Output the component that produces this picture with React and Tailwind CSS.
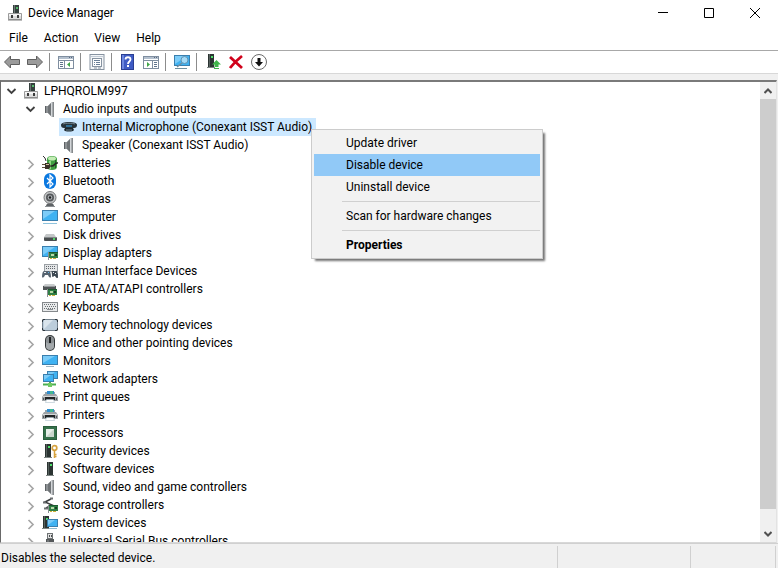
import React, { useState } from 'react';

const Icon = ({ children, size = 16 }) => (
  <svg width={size} height={size} viewBox="0 0 16 16" className="shrink-0" aria-hidden="true">
    {children}
  </svg>
);

/* Shared icon pieces */
const Screen = ({ x, y, w, h }) => (
  <>
    <rect x={x} y={y} width={w} height={h} fill="#3a7fae" />
    <rect x={x + 1} y={y + 1} width={w - 2} height={h - 2} fill="#3fb2f2" />
    <path d={`M${x + 1} ${y + 1}h${w - 4}L${x + 1} ${y + h - 2}z`} fill="#7cccf8" />
  </>
);

const Card = ({ x, y }) => (
  <>
    <rect x={x} y={y} width="1" height="8" fill="#8a8f92" />
    <rect x={x + 1} y={y} width="9" height="6" fill="#2f7f45" />
    <rect x={x + 1} y={y} width="9" height="1" fill="#1d5a2e" />
    <rect x={x + 3} y={y + 2} width="3" height="2" fill="#b9d9a8" />
    <rect x={x + 7} y={y + 2} width="2" height="2" fill="#173d22" />
    <path d={`M${x + 2} ${y + 6}h2v1h-2zM${x + 5} ${y + 6}h3v1h-3z`} fill="#d0b13c" />
  </>
);

const Tower = ({ x, y = 1, h = 13 }) => (
  <>
    <rect x={x} y={y} width="6" height={h} fill="#2b3432" />
    <rect x={x + 1} y={y} width="1" height={h} fill="#56605d" />
    <rect x={x + 3} y={y + 2} width="2" height="2" fill="#4ee06a" />
    <rect x={x - 1} y={y + h} width="8" height="1" fill="#7d8583" />
  </>
);

const RootIcon = () => (
  <Icon>
    <rect x="6" y="0" width="6" height="9" fill="#36403e" />
    <rect x="7" y="0" width="1" height="8" fill="#6c7674" />
    <rect x="9" y="2" width="2" height="2" fill="#55b96b" />
    <path d="M1.500 8.500h13v6h-13z" fill="#dcdcdc" stroke="#9a9a9a" />
    <path d="M2 9h12v2H2z" fill="#f4f4f4" />
    <path d="M4 10h2v3H4zM10 10h2v3h-2z" fill="#3b3b3b" />
    <path d="M1 15h14" stroke="#7f7f7f" />
  </Icon>
);

const SpeakerIcon = () => (
  <Icon>
    <rect x="3" y="5" width="3" height="7" fill="#8d9194" />
    <rect x="3" y="5" width="1" height="7" fill="#5d6164" />
    <path d="M6 5l4-4h2v15h-2l-4-4z" fill="#a7abae" />
    <path d="M6 5l3-3v13l-3-3z" fill="#6f7376" />
    <path d="M11 1h1v15h-1z" fill="#85898c" />
    <path d="M9.500 2v13" stroke="#d3d6d9" />
  </Icon>
);

const MicrophoneIcon = () => (
  <Icon>
    <path d="M0 6c0-2 3-3 8-3s8 1 8 3-1 3-3 3H3C1 9 0 8 0 6z" fill="#27333b" />
    <path d="M2 5c2-1 10-1 12 0" stroke="#72848f" fill="none" />
    <rect x="5" y="6" width="6" height="2" fill="#2f6f96" />
    <path d="M4 9h8l1 2c-1 2-9 2-10 0z" fill="#1c262c" />
    <path d="M5 11h6" stroke="#6d8390" />
  </Icon>
);

const BatteryIcon = () => (
  <Icon>
    <path d="M5 4c0-2 2-3 5-3s5 1 5 3v8c0 2-2 3-5 3s-5-1-5-3z" fill="#3f9f42" />
    <ellipse cx="10" cy="3.500" rx="4" ry="2" fill="#c3ecb4" />
    <path d="M8 6v8" stroke="#8fdb83" strokeWidth="2" />
    <path d="M13.500 5v8" stroke="#22602a" />
    <path d="M1 1l2 2 1 3" stroke="#333" fill="none" />
    <path d="M0 9.500h4M0 12.500h4" stroke="#5d4f3b" />
    <path d="M3 8h4l2 3-2 3H3z" fill="#3b3229" />
    <path d="M4 9.500h3" stroke="#d4c49b" />
    <path d="M9 11c4 1 3-4 7-3" stroke="#222" strokeWidth="1.500" fill="none" />
  </Icon>
);

const BluetoothIcon = () => (
  <Icon>
    <rect x="2" y="0" width="12" height="16" rx="6" fill="#0a78e0" />
    <path d="M5 5l6 6-3 3V2l3 3-6 6" fill="none" stroke="#fff" strokeWidth="1.200" />
  </Icon>
);

const CameraIcon = () => (
  <Icon>
    <path d="M4 15c0-2 2-3 4-3s4 1 4 3z" fill="#5e6265" />
    <circle cx="8" cy="6.500" r="6" fill="#c7c9ca" stroke="#77797b" />
    <circle cx="8" cy="6.500" r="4" fill="#55585b" />
    <circle cx="8" cy="6.500" r="2.300" fill="#aeb2b5" />
    <circle cx="8" cy="6.500" r="1.200" fill="#1e2022" />
    <path d="M3 15.500h10" stroke="#8b8f92" />
  </Icon>
);

const ComputerIcon = () => (
  <Icon>
    <Screen x={0} y={1} w={16} h={11} />
    <path d="M1 14.500h14" stroke="#8fc3dd" />
  </Icon>
);

const DiskIcon = () => (
  <Icon>
    <path d="M4 7h8l2 3H2z" fill="#c3c6c7" />
    <rect x="2" y="10" width="13" height="4" rx="1" fill="#4a4e50" />
    <path d="M2 10.500h13" stroke="#85898b" />
    <rect x="11" y="11" width="2" height="2" fill="#53d669" />
  </Icon>
);

const DisplayIcon = () => (
  <Icon>
    <Screen x={0} y={1} w={16} h={11} />
    <Card x={6} y={7} />
  </Icon>
);

const HidIcon = () => (
  <Icon>
    <rect x="2.500" y="1.500" width="13" height="7" fill="#e4e6e8" stroke="#9ba0a4" />
    <path d="M4 3.500h10M4 5.500h10" stroke="#62676b" strokeDasharray="1 1" />
    <path d="M0 14c0-4 1-6 2-6h5c1 0 2 2 2 6 0 1-2 1-3-2H3c-1 3-3 3-3 2z" fill="#56636f" />
    <path d="M9.500 8h4.500c2 0 2 3 2 6 0 2-2 1-3-1h-1c-1 2-2 1-2-1z" fill="#3d4852" />
    <path d="M2 9.500h2M11 9.500h1M13 10.500h1" stroke="#e6eaed" />
    <rect x="6" y="9" width="1" height="1" fill="#5bb2e8" />
  </Icon>
);

const IdeIcon = () => (
  <Icon>
    <path d="M3 3h9l2 2H1z" fill="#c9cccd" />
    <path d="M1 5h13v4H1z" fill="#505456" />
    <path d="M2 5.500h11" stroke="#95999b" />
    <Card x={5} y={8} />
  </Icon>
);

const KeyboardIcon = () => (
  <Icon>
    <rect x="0.500" y="3.500" width="15" height="9" fill="#e8eaeb" stroke="#85898c" />
    <path d="M2 5.500h12M2 9.500h12" stroke="#6b7073" strokeDasharray="1 1" />
    <path d="M3 7.500h11" stroke="#6b7073" strokeDasharray="1 1" />
    <path d="M5 10.500h6" stroke="#8b9093" />
  </Icon>
);

const MemoryIcon = () => (
  <Icon>
    <rect x="0.500" y="2.500" width="15" height="11" rx="2" fill="#bccddb" stroke="#74828e" />
    <path d="M2 3h9L2 12z" fill="#d9e4ec" />
    <path d="M1 2h2v1H1v2H0V3zM13 2h2l1 1v2h-1V3h-2zM0 11h1v2h2v1H1l-1-1zM15 11h1v2l-1 1h-2v-1h2z" fill="#2e373e" />
  </Icon>
);

const MouseIcon = () => (
  <Icon>
    <rect x="3" y="0" width="10" height="16" rx="5" fill="#34383a" />
    <rect x="4" y="1" width="8" height="14" rx="4" fill="#8b9093" />
    <path d="M4 7c2 2 6 2 8 0v4c0 5-8 5-8 0z" fill="#a4a9ac" />
    <rect x="7" y="2" width="2" height="6" fill="#1f2224" />
  </Icon>
);

const MonitorIcon = () => (
  <Icon>
    <Screen x={0} y={2} w={16} h={10} />
    <path d="M4 13.500h8" stroke="#9eb4c0" />
  </Icon>
);

const NetworkIcon = () => (
  <Icon>
    <Screen x={5} y={0} w={11} h={8} />
    <Screen x={1} y={3} w={11} h={8} />
    <path d="M7 11h2v2H7z" fill="#4f9f58" />
    <path d="M1 13.500h13" stroke="#4caf50" strokeWidth="2" />
    <rect x="6" y="12" width="4" height="4" fill="#6fca62" />
  </Icon>
);

const PrinterIcon = () => (
  <Icon>
    <path d="M3 3h10v4H3z" fill="#8fa3ae" />
    <path d="M5 2h7v4H5z" fill="#2f8fd0" />
    <path d="M8 2h3v3H8z" fill="#43b88e" />
    <path d="M2 5h12l2 3v4H0V8z" fill="#9ea3a6" />
    <path d="M1 7h14v1H1z" fill="#d6d9da" />
    <path d="M3 8h10v3H3z" fill="#212426" />
    <path d="M4.500 10.500h7l1 3h-9z" fill="#fff" stroke="#9fb4c0" strokeWidth="0.500" />
    <path d="M1 9h1v2H1zM14 9h1v2h-1z" fill="#55595c" />
  </Icon>
);

const ProcessorIcon = () => (
  <Icon>
    <rect x="1" y="1" width="14" height="14" fill="#35704a" />
    <rect x="1.500" y="1.500" width="13" height="13" fill="none" stroke="#1e4a2e" strokeDasharray="1 1" />
    <rect x="4" y="4" width="8" height="8" fill="#c9d6cc" />
    <path d="M4 4h8l-8 8z" fill="#e7efe9" />
  </Icon>
);

const SecurityIcon = () => (
  <Icon>
    <Tower x={3} />
    <circle cx="12.500" cy="5" r="2.300" fill="none" stroke="#d6a23f" strokeWidth="1.700" />
    <path d="M12.500 7v8M12.500 11.500h2M12.500 13.500h2" stroke="#d6a23f" strokeWidth="1.500" />
  </Icon>
);

const SoftwareIcon = () => (
  <Icon>
    <Tower x={5} />
  </Icon>
);

const StorageIcon = () => (
  <Icon>
    <path d="M9 2L3 5l7 3-6 3" fill="none" stroke="#3a3d3f" strokeWidth="1.500" />
    <path d="M8 1.500h3M1 5.500h3M2 11.500h4" stroke="#6b6f71" strokeWidth="2" />
    <Card x={6} y={8} />
  </Icon>
);

const SystemIcon = () => (
  <Icon>
    <Tower x={1} y={1} h={12} />
    <Screen x={5} y={4} w={11} h={8} />
    <path d="M7 13.500h8" stroke="#8fb9cf" />
  </Icon>
);

const UsbIcon = () => (
  <Icon>
    <rect x="5.500" y="0.500" width="5" height="5" fill="#e2e2e2" stroke="#6e7274" />
    <path d="M7 2h1v2H7zM9 2h1v2H9z" fill="#4a4e50" />
    <path d="M4 6h8v8l-2 2H6l-2-2z" fill="#54585a" />
    <path d="M6 7v7" stroke="#8a8e90" />
  </Icon>
);

const categories = [
  { name: 'Batteries', icon: BatteryIcon },
  { name: 'Bluetooth', icon: BluetoothIcon },
  { name: 'Cameras', icon: CameraIcon },
  { name: 'Computer', icon: ComputerIcon },
  { name: 'Disk drives', icon: DiskIcon },
  { name: 'Display adapters', icon: DisplayIcon },
  { name: 'Human Interface Devices', icon: HidIcon },
  { name: 'IDE ATA/ATAPI controllers', icon: IdeIcon },
  { name: 'Keyboards', icon: KeyboardIcon },
  { name: 'Memory technology devices', icon: MemoryIcon },
  { name: 'Mice and other pointing devices', icon: MouseIcon },
  { name: 'Monitors', icon: MonitorIcon },
  { name: 'Network adapters', icon: NetworkIcon },
  { name: 'Print queues', icon: PrinterIcon },
  { name: 'Printers', icon: PrinterIcon },
  { name: 'Processors', icon: ProcessorIcon },
  { name: 'Security devices', icon: SecurityIcon },
  { name: 'Software devices', icon: SoftwareIcon },
  { name: 'Sound, video and game controllers', icon: SpeakerIcon },
  { name: 'Storage controllers', icon: StorageIcon },
  { name: 'System devices', icon: SystemIcon },
  { name: 'Universal Serial Bus controllers', icon: UsbIcon },
];

const audioDevices = [
  { name: 'Internal Microphone (Conexant ISST Audio)', icon: MicrophoneIcon },
  { name: 'Speaker (Conexant ISST Audio)', icon: SpeakerIcon },
];

const Chevron = ({ open }) => (
  <svg width="16" height="16" viewBox="0 0 16 16" className="shrink-0" fill="none" aria-hidden="true">
    {open ? (
      <path d="M4.500 6l4 4 4-4" stroke="#404040" strokeWidth="1.800" />
    ) : (
      <path d="M6.500 5l4.500 4.500L6.500 14" stroke="#a6a6a6" strokeWidth="1.700" />
    )}
  </svg>
);

const TreeRow = ({ icon: RowIcon, name, open, leaf, selected, onClick }) => (
  <button type="button" onClick={onClick} className="flex h-[18px] items-center gap-0.5 whitespace-nowrap">
    {leaf ? <span className="w-4" /> : <Chevron open={open} />}
    <span className={`flex h-[18px] items-center gap-[5px] pr-1 pl-0.5 ${selected ? 'bg-[#cce8ff]' : ''}`}>
      <RowIcon />
      <span>{name}</span>
    </span>
  </button>
);

const toolbar = [
  {
    label: 'Back',
    art: <path d="M0.500 8l6-6v3.500h9v5h-9V14z" fill="#9b9b9b" stroke="#5f5f5f" />,
  },
  {
    label: 'Forward',
    art: <path d="M15.500 8l-6-6v3.500h-9v5h9V14z" fill="#9b9b9b" stroke="#5f5f5f" />,
  },
  null,
  {
    label: 'Show/Hide Console Tree',
    art: (
      <>
        <rect x="0.500" y="2.500" width="15" height="12" fill="#fff" stroke="#7f8ea0" />
        <path d="M1 3h14v2H1z" fill="#b4c0ce" />
        <path d="M11 3.500h3" stroke="#5b6b80" strokeDasharray="1 1" />
        <path d="M1 6.500h14M6.500 7v7" stroke="#7f8ea0" />
        <path d="M2 8.500h3M2 10.500h3M2 12.500h3" stroke="#60748c" />
        <path d="M12 8v5l-3-2.500z" fill="#3fa648" />
      </>
    ),
  },
  null,
  {
    label: 'Properties',
    art: (
      <>
        <rect x="1" y="0.500" width="14" height="15" fill="#f4f6f8" stroke="#8793a1" />
        <path d="M2 2.500h12" stroke="#c3ccd6" />
        <rect x="3.500" y="4.500" width="9" height="8" fill="#fff" stroke="#8793a1" />
        <path d="M5 6.500h6M5 8.500h1M7 8.500h4M5 10.500h1M7 10.500h4" stroke="#6b8098" />
        <path d="M5 14h3M9 14h3" stroke="#8793a1" />
      </>
    ),
  },
  null,
  {
    label: 'Help',
    art: (
      <>
        <rect x="1.500" y="0.500" width="12" height="15" fill="#3e5bc4" stroke="#2a3f93" />
        <path d="M2 1h2v14H2z" fill="#6d87df" />
        <path d="M5.500 5.500c0-3 5-3 5 0 0 2-2.500 2-2.500 4.500" fill="none" stroke="#fff" strokeWidth="1.800" />
        <rect x="7" y="11" width="2" height="2" fill="#fff" />
      </>
    ),
  },
  {
    label: 'Show/Hide Action Pane',
    art: (
      <>
        <rect x="0.500" y="2.500" width="15" height="12" fill="#fff" stroke="#7f8ea0" />
        <path d="M1 3h14v2H1z" fill="#b4c0ce" />
        <path d="M11 3.500h3" stroke="#5b6b80" strokeDasharray="1 1" />
        <path d="M1 6.500h14M9.500 7v7" stroke="#7f8ea0" />
        <path d="M11 8.500h3M11 10.500h3M11 12.500h3" stroke="#60748c" />
        <path d="M4 8v5l3-2.500z" fill="#3fa648" />
      </>
    ),
  },
  null,
  {
    label: 'Scan for hardware changes',
    art: (
      <>
        <Screen x={0} y={1} w={16} h={11} />
        <path d="M1 14.500h12" stroke="#6f8f9f" />
        <circle cx="10.500" cy="6" r="3.500" fill="#a5daf6" stroke="#5f93b3" />
        <path d="M8 9l-5 4" stroke="#6f8fa2" strokeWidth="1.500" />
      </>
    ),
  },
  null,
  {
    label: 'Update driver',
    art: (
      <>
        <Tower x={3} y={0} h={13} />
        <path d="M11.500 6l4.500 4.500h-2.500V13h-4v-2.500H7z" fill="#3fb54a" />
        <path d="M9 14.500h5" stroke="#3fb54a" />
      </>
    ),
  },
  {
    label: 'Uninstall device',
    art: <path d="M2 3l12 11M14 2C9 6 5 10 2 14" fill="none" stroke="#d0021b" strokeWidth="2.800" />,
  },
  {
    label: 'Disable device',
    art: (
      <>
        <circle cx="8" cy="8" r="7.500" fill="#fff" stroke="#6a6a6a" />
        <path d="M6.500 4h3v4H12l-4 4.500L4 8h2.500z" fill="#111" />
      </>
    ),
  },
];

const Toolbar = () => (
  <div className="flex h-[23px] items-center border-b border-[#d8d8d8]">
    {toolbar.map((tool, i) =>
      tool ? (
        <button key={tool.label} type="button" aria-label={tool.label} className="flex w-[23px] justify-center">
          <Icon>{tool.art}</Icon>
        </button>
      ) : (
        <span key={i} className="mr-[4px] ml-[3px] h-[18px] w-px bg-[#8c8c8c]" />
      )
    )}
  </div>
);

const TitleBar = () => (
  <header className="flex h-[26px] items-center pl-[7px]">
    <RootIcon />
    <h1 className="ml-[5px] flex-1">Device Manager</h1>
    <button type="button" aria-label="Minimize" className="flex h-full w-[46px] items-center justify-center">
      <svg width="10" height="10" viewBox="0 0 10 10"><path d="M0 4.500h10" stroke="#000" /></svg>
    </button>
    <button type="button" aria-label="Maximize" className="flex h-full w-[46px] items-center justify-center">
      <svg width="10" height="10" viewBox="0 0 10 10"><path d="M0.500 0.500h9v9h-9z" fill="none" stroke="#000" /></svg>
    </button>
    <button type="button" aria-label="Close" className="flex h-full w-[46px] items-center justify-center">
      <svg width="10" height="10" viewBox="0 0 10 10"><path d="M0 0l10 10M10 0L0 10" stroke="#000" /></svg>
    </button>
  </header>
);

const MenuItem = ({ children, active, bold, onClick }) => (
  <button
    type="button"
    role="menuitem"
    onClick={onClick}
    className={`block h-[22px] w-full pl-8 text-left ${active ? 'bg-[#91c9f7]' : 'hover:bg-[#91c9f7]'} ${bold ? 'font-bold' : ''}`}
  >
    {children}
  </button>
);

const ContextMenu = ({ onClose }) => (
  <div
    role="menu"
    className="absolute top-[129px] left-[311px] w-[232px] border border-[#cccccc] bg-[#f2f2f2] p-0.5 shadow-[3px_3px_2px_-1px_rgba(0,0,0,0.55)]"
  >
    <MenuItem onClick={onClose}>Update driver</MenuItem>
    <MenuItem active onClick={onClose}>Disable device</MenuItem>
    <MenuItem onClick={onClose}>Uninstall device</MenuItem>
    <hr className="my-[3px] ml-7 border-[#d0d0d0]" />
    <MenuItem onClick={onClose}>Scan for hardware changes</MenuItem>
    <hr className="my-[3px] ml-7 border-[#d0d0d0]" />
    <MenuItem bold onClick={onClose}>Properties</MenuItem>
  </div>
);

const ScrollBar = () => (
  <div className="flex w-4 flex-col bg-[#f0f0f0]">
    <button type="button" aria-label="Scroll up" className="flex h-[17px] items-center justify-center">
      <svg width="8" height="6" viewBox="0 0 8 6"><path d="M0.500 5L4 1.500 7.500 5" fill="none" stroke="#505050" strokeWidth="2" /></svg>
    </button>
    <div className="flex-1 pb-4">
      <div className="h-full bg-[#cdcdcd]" />
    </div>
    <button type="button" aria-label="Scroll down" className="flex h-[17px] items-center justify-center">
      <svg width="8" height="6" viewBox="0 0 8 6"><path d="M0.500 1L4 4.500 7.500 1" fill="none" stroke="#505050" strokeWidth="2" /></svg>
    </button>
  </div>
);

const App = () => {
  const [selected, setSelected] = useState(audioDevices[0].name);
  const [menuOpen, setMenuOpen] = useState(true);

  const select = (name) => {
    setSelected(name);
    setMenuOpen(false);
  };

  return (
    <div className="relative flex h-screen flex-col overflow-hidden bg-white font-['Roboto','Open_Sans',sans-serif] text-[12px] leading-[20px] text-black">
      <TitleBar />

      <nav className="flex h-[25px] items-center gap-4 border-b border-[#a8a8a8] pl-[9px]">
        {['File', 'Action', 'View', 'Help'].map((item) => (
          <button key={item} type="button">{item}</button>
        ))}
      </nav>

      <Toolbar />

      {/* Device tree */}
      <main className="flex min-h-0 flex-1 bg-[#f0f0f0] pt-1.5 pr-px">
        <div className="flex min-w-0 flex-1 border-t-2 border-r border-b border-l border-t-[#7a7a7a] border-r-[#e3e3e3] border-b-[#d8d8d8] border-l-[#696969] bg-white">
          <div className="min-w-0 flex-1 overflow-hidden pl-0.5">
            <TreeRow icon={RootIcon} name="LPHQROLM997" open onClick={() => select('LPHQROLM997')} />
            <div className="pl-[19px]">
              <TreeRow icon={SpeakerIcon} name="Audio inputs and outputs" open onClick={() => select('Audio inputs and outputs')} />
              <div className="pl-[19px]">
                {audioDevices.map((d) => (
                  <TreeRow key={d.name} {...d} leaf selected={selected === d.name} onClick={() => select(d.name)} />
                ))}
              </div>
              {categories.map((c) => (
                <TreeRow key={c.name} {...c} selected={selected === c.name} onClick={() => select(c.name)} />
              ))}
            </div>
          </div>
          <ScrollBar />
        </div>
      </main>

      {/* Status bar */}
      <footer className="flex h-[25px] border-t border-[#d0d0d0] bg-[#f0f0f0] pt-0.5 pr-0.5">
        <p className="flex flex-1 items-center border-r border-[#d0d0d0] pt-0.5 pl-px">Disables the selected device.</p>
        <span className="w-[133px] border-r border-[#d0d0d0]" />
        <span className="w-[85px] border-r border-[#d0d0d0]" />
      </footer>

      {menuOpen && <ContextMenu onClose={() => setMenuOpen(false)} />}
    </div>
  );
};

export default App;
